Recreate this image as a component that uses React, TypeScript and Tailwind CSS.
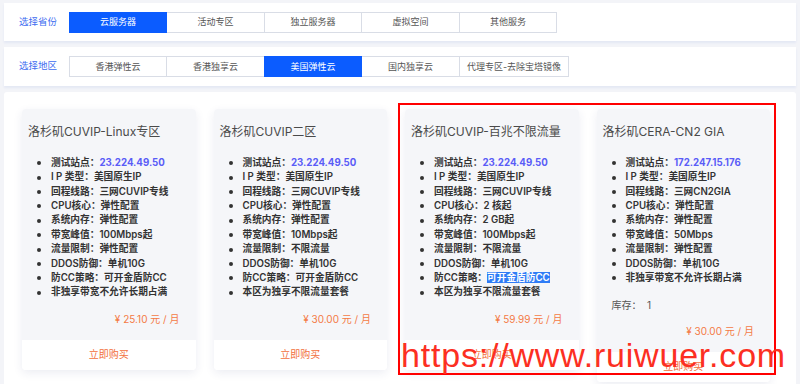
import React from "react";

type Item = { k?: string; v: React.ReactNode; link?: boolean; hl?: boolean };
type Card = { title: string; items: Item[]; stock?: string; price: string };

const cards: Card[] = [
  {
    title: "洛杉矶CUVIP-Linux专区",
    items: [
      { k: "测试站点：", v: "23.224.49.50", link: true },
      { k: "I P 类型：", v: "美国原生IP" },
      { k: "回程线路：", v: "三网CUVIP专线" },
      { k: "CPU核心：", v: "弹性配置" },
      { k: "系统内存：", v: "弹性配置" },
      { k: "带宽峰值：", v: "100Mbps起" },
      { k: "流量限制：", v: "弹性配置" },
      { k: "DDOS防御：", v: "单机10G" },
      { k: "防CC策略：", v: "可开金盾防CC" },
      { v: "非独享带宽不允许长期占满" },
    ],
    price: "¥ 25.10 元 / 月",
  },
  {
    title: "洛杉矶CUVIP二区",
    items: [
      { k: "测试站点：", v: "23.224.49.50", link: true },
      { k: "I P 类型：", v: "美国原生IP" },
      { k: "回程线路：", v: "三网CUVIP专线" },
      { k: "CPU核心：", v: "弹性配置" },
      { k: "系统内存：", v: "弹性配置" },
      { k: "带宽峰值：", v: "10Mbps起" },
      { k: "流量限制：", v: "不限流量" },
      { k: "DDOS防御：", v: "单机10G" },
      { k: "防CC策略：", v: "可开金盾防CC" },
      { v: "本区为独享不限流量套餐" },
    ],
    price: "¥ 30.00 元 / 月",
  },
  {
    title: "洛杉矶CUVIP-百兆不限流量",
    items: [
      { k: "测试站点：", v: "23.224.49.50", link: true },
      { k: "I P 类型：", v: "美国原生IP" },
      { k: "回程线路：", v: "三网CUVIP专线" },
      { k: "CPU核心：", v: "2 核起" },
      { k: "系统内存：", v: "2 GB起" },
      { k: "带宽峰值：", v: "100Mbps起" },
      { k: "流量限制：", v: "不限流量" },
      { k: "DDOS防御：", v: "单机10G" },
      { k: "防CC策略：", v: "可开金盾防CC", hl: true },
      { v: "本区为独享不限流量套餐" },
    ],
    price: "¥ 59.99 元 / 月",
  },
  {
    title: "洛杉矶CERA-CN2 GIA",
    items: [
      { k: "测试站点：", v: "172.247.15.176", link: true },
      { k: "I P 类型：", v: "美国原生IP" },
      { k: "回程线路：", v: "三网CN2GIA" },
      { k: "CPU核心：", v: "弹性配置" },
      { k: "系统内存：", v: "弹性配置" },
      { k: "带宽峰值：", v: "50Mbps" },
      { k: "流量限制：", v: "弹性配置" },
      { k: "DDOS防御：", v: "单机10G" },
      { v: "非独享带宽不允许长期占满" },
    ],
    stock: "库存：  1",
    price: "¥ 30.00 元 / 月",
  },
];

function Tabs({ tabs, active }: { tabs: { label: string; w: string }[]; active: number }) {
  return (
    <div className="flex">
      {tabs.map((t, i) => (
        <div
          key={t.label}
          className={
            "h-[21px] flex items-center justify-center text-[9px] border " +
            t.w +
            (i > 0 ? " -ml-px" : "") +
            (i === active
              ? " bg-[#0b5cff] border-[#0b5cff] text-white relative"
              : " bg-white border-[#d9dde6] text-[#555]")
          }
        >
          {t.label}
        </div>
      ))}
    </div>
  );
}

function CardView({ c }: { c: Card }) {
  return (
    <div className="w-[173.5px] flex flex-col rounded-[4px] overflow-hidden shadow-[0_3px_10px_rgba(40,60,120,0.09)]">
      <div className="bg-[#f5f6f9] pt-[15px] pb-[14px]">
        <div className="pl-[6px] text-[12px] leading-[16px] text-[#4a4a4a] whitespace-nowrap">{c.title}</div>
        <ul className="mt-[16px]">
          {c.items.map((it, i) => (
            <li key={i} className="flex items-center h-[14.4px] text-[9.7px] font-semibold text-[#333] whitespace-nowrap">
              <span className="ml-[15px] w-[4px] h-[4px] rounded-full bg-[#333] shrink-0" />
              <span className="ml-[10px]">
                {it.k}
                {it.link ? (
                  <span className="text-[#5a5cf7] font-bold">{it.v}</span>
                ) : it.hl ? (
                  <span className="bg-[#2f7cf6] text-white">{it.v}</span>
                ) : (
                  it.v
                )}
              </span>
            </li>
          ))}
        </ul>
        {c.stock && (
          <div className="mt-[12px] pl-[15px] text-[10px] leading-[14px] text-[#555] whitespace-pre">{c.stock}</div>
        )}
        <div className="mt-[12px] pr-[16px] text-right text-[10px] leading-[14px] text-[#f47a45]">{c.price}</div>
      </div>
      <div className="h-[30px] bg-white flex items-center justify-center text-[10px] text-[#f26f3c]">立即购买</div>
    </div>
  );
}

export default function App() {
  return (
    <div
      className="relative w-[800px] h-[384px] overflow-hidden bg-[#f3f4f8]"
      style={{ fontFamily: '"Inter", "Noto Sans CJK SC", sans-serif' }}
    >
      <div className="mx-[4px] mt-[3px] h-[38px] bg-white flex items-center pl-[15px] shadow-[0_2px_2px_#e4e8f4]">
        <div className="w-[50px] text-[9.5px] text-[#3d6cf0]">选择省份</div>
        <Tabs
          active={0}
          tabs={[
            { label: "云服务器", w: "w-[98px]" },
            { label: "活动专区", w: "w-[99px]" },
            { label: "独立服务器", w: "w-[98px]" },
            { label: "虚拟空间", w: "w-[99px]" },
            { label: "其他服务", w: "w-[98px]" },
          ]}
        />
      </div>
      <div className="mx-[4px] mt-[6px] h-[39px] bg-white flex items-center pl-[15px] shadow-[0_2px_2px_#e4e8f4]">
        <div className="w-[50px] text-[9.5px] text-[#3d6cf0]">选择地区</div>
        <Tabs
          active={2}
          tabs={[
            { label: "香港弹性云", w: "w-[98px]" },
            { label: "香港独享云", w: "w-[99px]" },
            { label: "美国弹性云", w: "w-[98px]" },
            { label: "国内独享云", w: "w-[99px]" },
            { label: "代理专区-去除宝塔镜像", w: "w-[110px]" },
          ]}
        />
      </div>
      <div className="mx-[4px] mt-[6px] bg-white rounded-t-[3px] px-[18px] pt-[17px] pb-[20px] flex gap-[18px] items-start">
        {cards.map((c) => (
          <CardView key={c.title} c={c} />
        ))}
      </div>

      <div className="absolute left-[398px] top-[103px] w-[378px] h-[272px] border-2 border-[#f00] pointer-events-none" />
      <div
        className="absolute left-[401px] top-[338px] text-[34px] leading-[34px] tracking-[0.8px] text-[#fc2f22] whitespace-nowrap"
        style={{ fontFamily: '"Liberation Sans", Arial, sans-serif' }}
      >
        https://www.ruiwuer.com
      </div>
    </div>
  );
}
